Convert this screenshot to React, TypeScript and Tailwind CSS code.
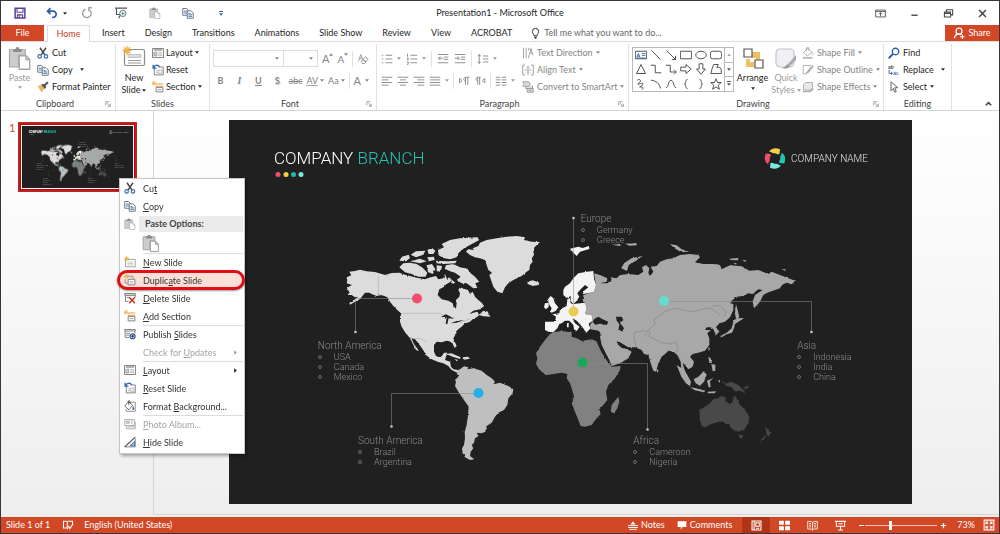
import React from "react";

type IconProps = { children: React.ReactNode; s?: string; box?: string };

function Icon({ children, s = "size-3", box = "0 0 16 16" }: IconProps) {
  return (
    <svg viewBox={box} className={`${s} shrink-0`} fill="none" stroke="currentColor" strokeWidth="1.2" aria-hidden="true">
      {children}
    </svg>
  );
}

function Caret() {
  return (
    <svg viewBox="0 0 6 4" className="h-[3px] w-1 shrink-0" aria-hidden="true">
      <path d="M0 0h6L3 4z" fill="currentColor" />
    </svg>
  );
}

/* ---------- Icons ---------- */

const SaveIcon = () => (
  <Icon>
    <path d="M1.5 1.5h13v13h-13z" stroke="#5b3fa0" strokeWidth="2" />
    <path d="M4 2v5h8V2M4.500 14.500v-4h7v4M7 11v3" stroke="#5b3fa0" strokeWidth="1.4" />
  </Icon>
);
const UndoIcon = () => (
  <Icon>
    <path d="M6 1.500 2 5.500l4 4M2.500 5.500H9c6 0 6.500 8-1 8.500" stroke="#2b5fae" strokeWidth="2.300" />
  </Icon>
);
const RedoIcon = () => (
  <Icon>
    <path d="M6 3a5.700 5.700 0 1 0 6 1.500M14.500 1h-4v4.500" stroke="#9b9b9b" strokeWidth="1.800" />
  </Icon>
);
const PresentIcon = () => (
  <Icon>
    <path d="M0 1.500h16M2 2v8h5M5 15l2.500-5" stroke="#555" strokeWidth="1.500" />
    <circle cx="10.500" cy="8.500" r="4.200" stroke="#4f7376" fill="#eef4f4" />
    <path d="m9.300 6.500 3.500 2-3.500 2z" fill="#44817f" stroke="none" />
  </Icon>
);
const ClipIcon = ({ s = "size-3", tone = "#a9a6a9" }: { s?: string; tone?: string }) => (
  <Icon s={s}>
    <path d="M1 2.500h10.500V6H7v8H1z" fill="#cfccd0" stroke={tone} strokeWidth=".8" />
    <path d="M3.500 4V2h1.700V.8h2.200V2h1.700v2z" fill="#8d8a8e" stroke="none" />
    <path d="M7.500 6.500H12l2.500 2.500v6.500h-7z" fill="#fff" stroke={tone} strokeWidth=".9" />
    <path d="M12 6.500V9h2.500" stroke={tone} strokeWidth=".9" />
  </Icon>
);
const CopyIcon = ({ s = "size-3" }: { s?: string }) => (
  <Icon s={s}>
    <path d="M1 2h5l2.500 2.500V11H1z" fill="#fff" stroke="#5d6b78" />
    <path d="M2.500 5.500h4M2.500 8h4" stroke="#3f6fa8" />
    <path d="M7 5h5l3 3v7H7z" fill="#fff" stroke="#5d6b78" />
    <path d="M8.500 8.500h3M8.500 10.500h5M8.500 12.500h5" stroke="#3f6fa8" />
  </Icon>
);
const CutIcon = ({ s = "size-3" }: { s?: string }) => (
  <Icon s={s}>
    <path d="M4 1l6.500 9.500M12 1 5.500 10.500" stroke="#444" strokeWidth="1.900" />
    <circle cx="3.500" cy="12.500" r="2.300" stroke="#3467ad" strokeWidth="1.500" />
    <circle cx="12" cy="12.500" r="2.300" stroke="#3467ad" strokeWidth="1.500" />
  </Icon>
);
const BrushIcon = () => (
  <Icon>
    <path d="m1 7 5-2 4 5-4 5z" fill="#f0b65a" stroke="none" />
    <path d="m5.500 5 3-1.500 4 4.500-2 2.500z" fill="#555" stroke="none" />
    <path d="m10 6 4.500-4.500" stroke="#555" strokeWidth="2.800" />
  </Icon>
);
const Spark = ({ x = 3.5, y = 3.5 }: { x?: number; y?: number }) => (
  <path
    d={`M${x} ${y - 3.5}v7M${x - 3.5} ${y}h7M${x - 2.5} ${y - 2.5}l5 5M${x + 2.5} ${y - 2.5}l-5 5`}
    stroke="#f0b040"
    strokeWidth="1.100"
  />
);
const NewSlideIcon = ({ s = "size-3" }: { s?: string }) => (
  <Icon s={s}>
    <path d="M2 4.500h13v10H2z" fill="#fff" stroke="#888" strokeWidth="1" />
    <path d="M4.500 8h8M4.500 10h8M4.500 12h8" stroke="#aaa" strokeWidth=".8" />
    <Spark />
  </Icon>
);
const BigNewSlideIcon = () => (
  <Icon s="h-[22px] w-[24px]" box="0 0 24 22">
    <rect x="2.500" y="3.500" width="20" height="16" rx="1.500" fill="#fff" stroke="#8a8a8a" />
    <path d="M6 8.500h13v3H6z" fill="#ddd" stroke="#bbb" strokeWidth=".8" />
    <path d="M6 14.500h13M6 17h13" stroke="#999" />
    <path d="M5 0v9M.5 4.500h9M1.800 1.300l6.400 6.400M8.200 1.300 1.800 7.700" stroke="#efb24a" strokeWidth="1.300" />
  </Icon>
);
const LayoutIcon = () => (
  <Icon>
    <path d="M.7 2h14.600v12H.7z" fill="#fff" stroke="#777" />
    <path d="M2.500 4h11" stroke="#777" strokeWidth="1.500" />
    <path d="M2.500 7h4v5h-4z" fill="#ccc" stroke="#888" strokeWidth=".8" />
    <path d="M8.500 7.500h5M8.500 9.500h5M8.500 11.500h5" stroke="#999" strokeWidth=".9" />
  </Icon>
);
const ResetIcon = () => (
  <Icon>
    <path d="M3 5v9.500h12V4H9" fill="#fff" stroke="#777" />
    <path d="M9 8h4v4.500H9zM5 9h3M5 11.500h3" stroke="#999" strokeWidth=".9" />
    <path d="M1.500 1v4.500H6M2 5c1.500-4 6.500-4.500 8-1" stroke="#2b66b0" strokeWidth="1.700" />
  </Icon>
);
const SectionIcon = () => (
  <Icon>
    <path d="M5 4h10M5 7h10" stroke="#e8a13c" strokeWidth="1.600" />
    <path d="M5.500 8.500h9v6h-9z" fill="#fff" stroke="#777" />
    <path d="M7.500 11.500h5" stroke="#999" />
    <Spark x={2.5} y={3} />
  </Icon>
);
const DuplicateIcon = () => (
  <Icon>
    <path d="M4 3h8v3M1.500 7v5H5" stroke="#888" />
    <path d="M5.500 7h9v7.500h-9z" fill="#fff" stroke="#777" />
    <path d="M7.500 10h5M7.500 12h5" stroke="#999" strokeWidth=".9" />
    <Spark x={3} y={3} />
  </Icon>
);
const DeleteIcon = () => (
  <Icon>
    <path d="M1 2h14v2.500H1z" fill="#ddd" stroke="#777" />
    <path d="M2 4.500v8h4M15 4.500V7M4 7.500h4" stroke="#777" />
    <path d="m7 7 7.500 8M14.500 7 7 15" stroke="#c42f25" strokeWidth="2" />
  </Icon>
);
const PublishIcon = () => (
  <Icon>
    <path d="M1 2h14v2H1zM1.500 4v8.500H7M14.500 4v3M3 7h5M3 9.500h4" stroke="#777" />
    <circle cx="11.500" cy="11" r="3.300" fill="#fff" stroke="#2b5c9e" strokeWidth="1.700" />
    <circle cx="11.500" cy="11" r="1.200" fill="#2b5c9e" />
  </Icon>
);
const FormatBgIcon = () => (
  <Icon>
    <path d="M5 3h10v12H3v-3" stroke="#888" fill="#fff" />
    <path d="m1 8 5-6 5.500 5-5 6z" fill="#fff" stroke="#555" strokeWidth="1.100" />
    <path d="M6 6V1.500C6 .5 8 .5 8 2v3" stroke="#555" />
    <path d="m12 7 1.800 5c0 1.500-2.800 1.500-2.600 0z" fill="#2b66b0" stroke="none" />
  </Icon>
);
const PhotoIcon = () => (
  <Icon>
    <path d="M1 2h13v8H1zM3.500 10v4.500H15V5" stroke="#aaa" />
    <path d="M3 4h4v3H3zM9 4h3M9 6.500h3M5 13l3-3 2 2 2-3 2 4" stroke="#aaa" fill="#ddd" />
  </Icon>
);
const HideIcon = () => (
  <Icon>
    <path d="M1 14.500h14V3.500" stroke="#777" />
    <path d="M8 13h6V7z" fill="#a9c4e4" stroke="#3b6aa8" />
    <path d="M1 14.500 15 1.500" stroke="#444" strokeWidth="1.400" />
  </Icon>
);
const Launcher = () => (
  <Icon s="size-[6px]" box="0 0 8 8">
    <path d="M1 6V1h5M3 3l4 4M7 3.500V7H3.500" stroke="#999" />
  </Icon>
);

type ListKind = "bullet" | "number" | "outdent" | "indent" | "spacing" | "left" | "center" | "right" | "justify" | "ltr" | "rtl" | "columns";

const listPaths: Record<ListKind, string> = {
  bullet: "M1 3h2M1 8h2M1 13h2M6 3h9M6 8h9M6 13h9",
  number: "M2 1v4M1 7h2v2H1M1 12h2v3H1M6 3h9M6 8h9M6 13h9",
  outdent: "M1 2h14M9 5.500h6M9 8.500h6M1 13h14M8 7H2M4.500 4.500 2 7l2.500 2.500",
  indent: "M1 2h14M9 5.500h6M9 8.500h6M1 13h14M1 7h6M4.500 4.500 7 7 4.500 9.500",
  spacing: "M3 2v12M1 4.500 3 2l2 2.500M1 11.500 3 14l2-2.500M8 4h7M8 8h7M8 12h7",
  left: "M1 3h14M1 6.500h9M1 10h14M1 13.500h9",
  center: "M1 3h14M4 6.500h8M1 10h14M4 13.500h8",
  right: "M1 3h14M6 6.500h9M1 10h14M6 13.500h9",
  justify: "M1 3h14M1 6.500h14M1 10h14M1 13.500h14",
  ltr: "M2 4.500v6L5.500 7.500zM10 13V3h5M13 3v10M10 3c-3 0-3 5 0 5",
  rtl: "M14.500 4.500v6L11 7.500zM5 13V3h4M7.500 3v10M5 3c-3 0-3 5 0 5",
  columns: "M1 3h6M1 6.500h6M1 10h6M1 13.500h6M9 3h6M9 6.500h6M9 10h6M9 13.500h6",
};

const ListIcon = ({ kind }: { kind: ListKind }) => (
  <Icon s="size-3">
    <path d={listPaths[kind]} stroke="#8f8f8f" strokeWidth="1.300" />
  </Icon>
);

/* ---------- Ribbon ---------- */

const btn = "flex items-center whitespace-nowrap";

function Group({ label, width, launcher, children }: { label: string; width: string; launcher?: boolean; children: React.ReactNode }) {
  return (
    <section className={`flex shrink-0 flex-col border-r border-[#e2e2e2] ${width}`}>
      <div className="flex h-[53px] items-start">{children}</div>
      <div className="flex h-[13px] items-center px-1">
        <span className="flex-1 text-center text-[#444]">{label}</span>
        {launcher && (
          <button aria-label={`${label} settings`}>
            <Launcher />
          </button>
        )}
      </div>
    </section>
  );
}

function Row({ icon, label, caret, muted, gap = "gap-[3px]" }: { icon: React.ReactNode; label: string; caret?: boolean; muted?: boolean; gap?: string }) {
  return (
    <button className={`${btn} h-[17px] ${gap} ${muted ? "text-[#858585]" : "text-[#262626]"}`}>
      {icon}
      <span>{label}</span>
      {caret && <Caret />}
    </button>
  );
}

function ShapeGallery() {
  const shapes = [
    <><path d="M.5 3h15v10H.5z" /><path d="m2.500 11 2-5 2 5M3 9.500h3M9 6h5M9 8.500h5M2 12h12" stroke="#35659f" /></>,
    <path d="m2 2 12 12" />,
    <path d="m2 2 12 12M14 9v5H9" />,
    <path d="M.5 3h15v10H.5z" />,
    <ellipse cx="8" cy="8" rx="7" ry="5" />,
    <rect x=".5" y="3" width="15" height="10" rx="3" />,
    <path d="m8 2 6 12H2z" />,
    <path d="M1 3h6v10h8" />,
    <path d="M1 3h6v9h8M12 9l3 3-3 3" />,
    <path d="M1 5.500h7V2l7 6-7 6v-3.500H1z" />,
    <path d="M5.500 1v7H2l6 7 6-7h-3.500V1z" />,
    <path d="M5 2h6L9 6c3-1 6 0 6 3v5H1l2-7z" />,
    <path d="M3 3c3-3 6 1 3 3S3 9 6 8s6-2 4 1-6 3-2 3 3 2 1 4" />,
    <path d="M1 3c7 0 12 5 13 11" />,
    <path d="M1 13C5 13 4 3 8 3s3 10 7 10" />,
    <path d="M10 2C6 2 9 8 6 8c3 0 0 6 4 6" />,
    <path d="M6 2c4 0 1 6 4 6-3 0 0 6-4 6" />,
    <path d="m8 1 2 5h5l-4 3.500 1.500 5.500L8 12l-4.500 3L5 9.500 1 6h5z" />,
  ];
  return (
    <div className="mt-[3px] flex h-[45px] border border-[#b9b9b9] text-[#444]">
      <div className="grid grid-cols-6 gap-x-px px-px">
        {shapes.map((shape, i) => (
          <button key={i} aria-label={`Shape ${i + 1}`} className="grid w-[14px] place-items-center">
            <Icon>{shape}</Icon>
          </button>
        ))}
      </div>
      <div className="grid w-[9px] grid-rows-3 border-l border-[#b9b9b9] text-[#555]">
        <button aria-label="Previous shapes" className="grid rotate-180 place-items-center text-[#aaa]"><Caret /></button>
        <button aria-label="Next shapes" className="grid place-items-center border-y border-[#b9b9b9]"><Caret /></button>
        <button aria-label="All shapes" className="flex flex-col items-center justify-center gap-px"><span className="h-px w-1 bg-[#555]" /><Caret /></button>
      </div>
    </div>
  );
}

function Ribbon() {
  const rule = <span className="h-4 w-px bg-[#e2e2e2]" />;
  return (
    <div className="flex overflow-hidden border-b border-[#d5d5d5] bg-white pt-[2px]">
      <Group label="Clipboard" width="w-[115px]" launcher>
        <button className="flex w-[33px] flex-col items-center pl-1 pt-[2px] text-[#9a9a9a]">
          <ClipIcon s="size-[24px]" />
          <span className="mt-[2px]">Paste</span>
          <span className="mt-[2px]"><Caret /></span>
        </button>
        <div className="pl-[3px]">
          <Row icon={<CutIcon />} label="Cut" />
          <button className={`${btn} h-[17px] gap-[3px]`}><CopyIcon /><span>Copy</span><span className="pl-1"><Caret /></span></button>
          <Row icon={<BrushIcon />} label="Format Painter" />
        </div>
      </Group>

      <Group label="Slides" width="w-[94px]">
        <button className="flex w-[36px] flex-col items-center pt-[2px] leading-3">
          <BigNewSlideIcon />
          <span className="mt-1">New</span>
          <span className="flex items-center gap-[2px]">Slide <Caret /></span>
        </button>
        <div>
          <Row icon={<LayoutIcon />} label="Layout" caret gap="gap-[2px]" />
          <Row icon={<ResetIcon />} label="Reset" gap="gap-[2px]" />
          <Row icon={<SectionIcon />} label="Section" caret gap="gap-[2px]" />
        </div>
      </Group>

      <Group label="Font" width="w-[167px]" launcher>
        <div className="flex-1 px-[3px] pt-[6px] text-[#858585]">
          <div className="flex h-[17px] items-center">
            <div className="grid h-[17px] w-[71px] items-center border border-[#dcdcdc]">
              <select aria-label="Font name" disabled className="col-start-1 row-start-1 size-full appearance-none"><option></option></select>
              <span className="col-start-1 row-start-1 justify-self-end pr-1"><Caret /></span>
            </div>
            <div className="grid h-[17px] w-[34px] items-center border border-l-0 border-[#dcdcdc]">
              <select aria-label="Font size" disabled className="col-start-1 row-start-1 size-full appearance-none"><option></option></select>
              <span className="col-start-1 row-start-1 justify-self-end pr-1"><Caret /></span>
            </div>
            <div className="flex flex-1 items-center justify-between pl-1 pr-1">
              <button aria-label="Increase font size" className="flex items-start text-[11px]">A<span className="rotate-180"><Caret /></span></button>
              <button aria-label="Decrease font size" className="flex items-start text-[10px]">A<Caret /></button>
              {rule}
              <button aria-label="Clear formatting"><Icon><path d="m2 11 3-9 3 8M3 7h4M6 11l5-6 4 3-5 6H7z" stroke="#999" /><path d="m8 9 4 3" stroke="#999" strokeWidth="2" /></Icon></button>
            </div>
          </div>
          <div className="mt-[5px] flex h-[17px] items-center justify-between pr-1">
            <button aria-label="Bold" className="w-[15px] font-bold">B</button>
            <button aria-label="Italic" className="w-[15px] font-['Liberation_Serif',serif] text-[10px] font-bold italic">I</button>
            <button aria-label="Underline" className="w-[15px] font-bold underline">U</button>
            <button aria-label="Shadow" className="w-[15px] font-bold [text-shadow:1px_1px_0_#ccc]">S</button>
            <button aria-label="Strikethrough" className="line-through">abc</button>
            <button aria-label="Character spacing" className="flex items-center gap-[2px]"><span className="border-b border-[#aaa] leading-[9px]">AV</span><Caret /></button>
            <button aria-label="Change case" className="flex items-center gap-[2px]">Aa<Caret /></button>
            {rule}
            <button aria-label="Font color" className="flex items-center gap-1 text-[11px]">A<Caret /></button>
          </div>
        </div>
      </Group>

      <Group label="Paragraph" width="w-[252px]" launcher>
        <div className="w-[145px] shrink-0 pl-1 pt-[6px] text-[#9a9a9a]">
          <div className="flex h-[17px] items-center gap-[5px]">
            <button aria-label="Bullets" className="flex items-center gap-1"><ListIcon kind="bullet" /><Caret /></button>
            <button aria-label="Numbering" className="flex items-center gap-1"><ListIcon kind="number" /><Caret /></button>
            {rule}
            <button aria-label="Decrease indent"><ListIcon kind="outdent" /></button>
            <button aria-label="Increase indent"><ListIcon kind="indent" /></button>
            {rule}
            <button aria-label="Line spacing" className="flex items-center gap-1"><ListIcon kind="spacing" /><Caret /></button>
          </div>
          <div className="mt-[5px] flex h-[17px] items-center gap-1">
            <button aria-label="Align left"><ListIcon kind="left" /></button>
            <button aria-label="Center"><ListIcon kind="center" /></button>
            <button aria-label="Align right"><ListIcon kind="right" /></button>
            <button aria-label="Justify" className="flex items-center gap-1"><ListIcon kind="justify" /><Caret /></button>
            {rule}
            <button aria-label="Left to right"><ListIcon kind="ltr" /></button>
            <button aria-label="Right to left"><ListIcon kind="rtl" /></button>
            {rule}
            <button aria-label="Columns" className="flex items-center gap-1"><ListIcon kind="columns" /><Caret /></button>
          </div>
        </div>
        <div>
          <Row muted caret label="Text Direction" icon={<Icon><path d="M2 1v14M5.500 1v14M9 11v4M9 1v4M9.500 11l2.500-9 2.500 9M10.500 8h3" stroke="#999" /></Icon>} />
          <Row muted caret label="Align Text" icon={<Icon><path d="M4 1.500H1v13h3M12 1.500h3v13h-3M4 8h8M8 2v4M6.500 4.500 8 6l1.500-1.500M8 14v-4M6.500 11.500 8 10l1.500 1.500" stroke="#999" /></Icon>} />
          <Row muted caret label="Convert to SmartArt" icon={<Icon><path d="M1 1h8l2 3-2 3H1l2-3zM5 7v3h9V6M7 10v5h8v-5zM9 12.500h4" stroke="#999" fill="#ddd" /></Icon>} />
        </div>
      </Group>

      <Group label="Drawing" width="w-[255px]" launcher>
        <div className="pl-[3px]"><ShapeGallery /></div>
        <button className="flex w-[37px] flex-col items-center pt-1 leading-3">
          <Icon s="size-[22px]" box="0 0 22 22">
            <path d="M10 4h8v8h-4V10h-4zM4 11h4v3h4v5H4z" fill="#efbe62" stroke="none" />
            <path d="M2 1h8v8H2zM13 12h8v8h-8z" fill="#fff" stroke="#555" />
          </Icon>
          <span className="mt-[2px]">Arrange</span>
          <span className="mt-[3px]"><Caret /></span>
        </button>
        <button className="flex w-[30px] flex-col items-center pt-1 leading-3 text-[#9a9a9a]">
          <Icon s="size-[22px]" box="0 0 22 22">
            <rect x="1" y="1" width="18" height="18" rx="4" fill="#f1eff3" stroke="#c5c1c8" />
            <path d="M21 7v5l-6 6-2-2z" fill="#aaa" stroke="none" /><path d="m13 16 2 2c-2 3-6 3-8 2 3 0 4-3 6-4z" fill="#999" stroke="none" />
          </Icon>
          <span className="mt-[2px]">Quick</span>
          <span className="flex items-center gap-[2px]">Styles <Caret /></span>
        </button>
        <div className="pl-px">
          <Row muted caret label="Shape Fill" icon={<Icon><path d="m2 7 6-5 5 5-6 5zM6 5V1h3v4M13 7c2 1 2 3 1 4" stroke="#aaa" /><path d="M1 14.500h13" stroke="#bbb" strokeWidth="2.500" /></Icon>} />
          <Row muted caret label="Shape Outline" icon={<Icon><path d="M12 2H1.500v11H7" stroke="#aaa" /><path d="m7 10 7-8 1 1-6 8-3 1z" fill="#aaa" stroke="#aaa" /></Icon>} />
          <Row muted caret label="Shape Effects" icon={<Icon><path d="m2 5 3-3h9v7l-3 3H2z" fill="#e8e8e8" stroke="#aaa" /><path d="M1 14h10l4-4" stroke="#aaa" strokeWidth="2.200" /></Icon>} />
        </div>
      </Group>

      <Group label="Editing" width="w-[68px]">
        <div className="pl-1">
          <Row label="Find" icon={<Icon><circle cx="10" cy="6" r="4.300" stroke="#2b5fae" strokeWidth="1.800" /><path d="m7 9-6 6" stroke="#2b5fae" strokeWidth="2.500" /></Icon>} />
          <button className={`${btn} h-[17px] gap-[3px]`}>
            <Icon>
              <text x="0" y="6" fontSize="7" fill="#444" stroke="none" fontWeight="bold">ab</text>
              <text x="7" y="14" fontSize="7" fill="#2b5fae" stroke="none" fontWeight="bold">ac</text>
              <path d="M1.500 8v4.500h4M4 10.500l2 2-2 2" stroke="#2b5fae" />
            </Icon>
            <span>Replace</span><span className="pl-1"><Caret /></span>
          </button>
          <Row label="Select" caret icon={<Icon><path d="M4 1v12l3-3 2 5 2-1-2-5h4z" fill="#fff" stroke="#555" /></Icon>} />
        </div>
      </Group>
      <div className="flex flex-1 items-end justify-end pr-[6px] pb-[2px]">
        <button aria-label="Collapse ribbon"><Icon s="size-[9px]" box="0 0 10 10"><path d="m2 7 3-3 3 3" stroke="#444" strokeWidth="1.800" /></Icon></button>
      </div>
    </div>
  );
}

/* ---------- Slide ---------- */

function SlideArt({ id }: { id: string }) {
  return (
    <svg viewBox="229 120 683 384" className="block size-full" aria-hidden="true">
      <defs>
        <filter id={id} x="-5%" y="-5%" width="110%" height="110%">
          <feTurbulence type="fractalNoise" baseFrequency="0.3" numOctaves="2" seed="4" />
          <feDisplacementMap in="SourceGraphic" scale="2" xChannelSelector="R" yChannelSelector="G" />
        </filter>
      </defs>
      <g filter={`url(#${id})`}>
        {/* North America and Greenland */}
        <g transform="translate(310 200) scale(.33333)" fill="#dcdcdc">
          <path d="M112 243 110 232 124 226 118 215 135 213 150 209 170 214 195 216 225 225 245 219 268 218 285 224 300 228 320 233 345 238 362 232 378 228 385 238 400 235 405 222 412 240 420 232 424 244 410 252 400 262 388 268 383 285 395 298 415 302 428 310 432 325 438 325 440 310 438 300 448 290 450 280 445 270 450 262 462 266 474 270 480 282 488 275 495 290 505 300 515 308 522 318 510 328 490 332 478 342 490 338 502 335 508 345 500 352 488 358 480 365 465 370 455 380 442 390 438 402 430 415 440 438 434 444 425 425 410 422 395 427 380 425 372 435 372 455 378 468 392 472 402 458 412 458 408 470 405 480 420 485 423 500 430 508 444 510 452 512 442 518 425 510 415 498 400 490 385 486 365 478 350 467 338 448 325 430 315 417 304 415 312 432 327 453 318 450 300 415 285 397 275 380 270 365 270 350 275 342 262 330 250 318 240 305 232 292 215 285 200 288 185 282 178 278 165 278 158 287 150 297 135 305 120 314 118 309 135 298 145 290 135 292 125 285 113 285 120 275 110 268 116 260 126 255 110 250z" />
          <path d="M480 165 468 155 475 148 492 150 488 145 505 138 510 128 530 120 560 115 590 110 620 108 645 112 642 120 665 125 690 126 675 140 670 155 672 165 665 175 668 185 660 195 658 210 650 215 635 228 610 240 595 250 585 262 577 280 562 275 550 260 545 245 538 225 546 218 535 210 530 195 525 180 510 175 495 172z" />
          <path d="M408 196 430 192 450 202 472 206 482 220 495 230 508 245 496 250 502 264 490 265 470 250 455 250 440 240 452 230 435 218 420 214 404 206z" />
          <path d="M268 202 280 190 300 188 320 192 338 203 352 218 347 230 325 230 305 222 285 217z" />
          <path d="M386 166 384 150 402 142 395 132 420 120 450 115 500 112 508 120 480 135 462 145 445 160 440 172 420 178 400 174z" />
          <path d="M268 182 276 170 296 164 300 174 288 184zM302 164 318 154 346 152 340 164 318 172zM300 184 330 176 350 184 330 190zM350 196 366 192 376 208 368 222 354 216zM378 182 412 184 440 182 436 190 400 192 380 190zM352 150 366 144 376 152 370 162 356 162zM380 196 396 198 392 216 380 212zM352 172 372 170 374 180 356 184zM422 236 436 248 428 252zM506 345 520 332 532 334 541 350 520 349zM408 462 424 460 452 472 450 477 428 470zM456 472 474 470 480 476 462 479zM434 477 444 480 440 484z" />
          <path d="M652 245 668 241 688 248 686 255 666 258 654 252z" />
          <path d="M393 350 408 343 422 350 432 356 416 355 412 372 407 372 410 352zM422 370 440 363 462 360 440 368z" fill="#202020" />
        </g>
        {/* South America and Africa */}
        <g transform="translate(340 350) scale(.33333)" fill="#bfbfbf">
          <path d="M350 62 360 58 372 49 385 52 382 58 400 55 425 62 440 75 455 85 465 95 460 103 480 98 505 108 520 118 518 130 505 145 502 165 492 180 475 188 465 200 455 218 440 228 436 245 425 250 410 248 416 258 405 265 402 278 395 285 400 295 392 305 390 318 403 328 390 330 375 322 368 310 366 295 372 285 375 265 374 245 380 225 384 195 386 170 372 150 358 130 345 108 348 95 345 90 355 80 352 70z" />
          <path d="M630-48 640-53 665-57 685-54 695-55 695-40 710-35 730-25 740-30 755-32 772-25 780-10 790 10 802 30 815 50 842 48 840 60 825 85 805 105 798 125 802 150 790 165 778 178 782 192 770 205 755 225 735 230 722 228 715 210 705 185 695 160 702 140 695 115 690 100 680 85 682 72 665 68 640 72 620 75 600 62 588 42 592 25 588 10 600-10 615-30zM812 185 815 165 825 152 835 140 838 155 832 175 822 190z" fill="#818181" />
        </g>
        {/* Asia */}
        <g transform="translate(520 200) scale(.33333)" fill="#a8a8a8">
          <path d="M222 220 240 225 262 235 260 245 240 250 262 250 275 240 272 232 290 235 300 225 325 222 355 225 370 215 366 202 378 195 388 205 385 220 390 228 400 215 392 200 410 198 420 185 440 178 460 175 480 165 510 162 535 165 540 172 525 187 550 192 580 192 600 195 605 208 630 196 665 199 688 212 715 210 745 222 755 215 780 225 825 242 815 253 800 248 785 255 780 265 765 270 742 278 730 285 720 305 702 325 698 305 705 285 715 278 728 270 715 268 698 282 685 280 670 288 650 290 635 302 630 310 640 312 640 330 630 352 615 365 598 370 588 382 598 395 588 405 580 388 572 382 560 382 555 390 572 390 562 400 568 415 568 435 555 452 535 458 518 462 510 470 522 485 518 500 505 508 495 495 488 488 492 505 502 528 494 528 484 505 482 485 472 465 460 455 445 452 438 460 425 470 415 490 408 515 400 512 392 490 385 465 372 462 365 450 345 442 325 442 302 428 293 422 290 430 305 444 318 446 335 455 325 475 300 490 275 498 268 480 255 455 245 435 240 410 245 402 235 392 212 388 210 376 218 362 215 345 195 342 200 325 195 308 188 300 190 285 222 275 228 255z" />
          <path d="M304 205 312 190 335 175 368 168 348 182 326 195 321 213zM450 132 470 136 485 148 508 155 482 156 462 143zM275 134 300 132 302 138zM315 131 350 130 350 136 328 137zM628 176 655 174 654 181 632 180zM664 180 678 181 676 185zM785 208 796 207 796 212zM640 188 650 190 648 194z" />
          <path d="M648 313 653 330 658 352 648 356 645 340zM642 360 652 355 672 354 660 362 645 372 642 385 636 398 620 403 605 412 600 408 620 398 635 385 638 370zM565 440 570 446 566 454zM565 470 572 475 576 490 568 488zM574 492 586 494 586 512 578 514 576 502zM470 495 485 505 502 525 513 545 510 559 498 550 484 530zM510 562 530 565 556 572 552 577 525 571zM562 575 588 574 584 580 564 580zM521 538 535 530 552 513 560 524 552 545 540 557 527 550zM561 542 580 534 570 544 572 562 566 562zM594 542 600 540 600 548zM408 505 416 512 412 518z" />
          <path d="M222 358 235 350 248 358 265 365 260 375 240 371 226 374 218 366zM288 350 305 350 310 360 300 368 312 385 306 395 296 388 298 372 290 362zM230 426 238 424 266 482 274 497 262 484 246 460z" fill="#202020" />
        </g>
        {/* Europe */}
        <g transform="translate(520 200) scale(.33333)" fill="#f4f4f4">
          <path d="M130 270 135 260 150 250 160 235 175 220 200 215 220 213 222 235 228 255 222 275 205 280 188 282 192 272 205 262 195 255 182 268 172 280 178 290 170 302 160 312 152 302 152 288 140 294 130 285z" />
          <path d="M75 365 105 365 108 350 97 343 118 340 120 328 140 318 142 298 150 294 152 310 160 312 195 308 200 325 195 342 215 345 218 362 205 372 212 385 198 399 190 385 182 375 170 362 158 355 165 370 179 380 170 393 162 388 160 375 148 362 135 362 125 370 118 372 112 385 100 397 85 395 75 390z" />
          <path d="M90 335 95 325 88 314 84 298 92 288 100 295 105 310 115 322 108 332 95 338zM72 322 75 310 86 308 86 320 78 328zM150 146 175 140 188 144 207 138 208 147 180 155 170 168 160 158zM141 370 146 368 146 382 141 382z" />
        </g>
        {/* Oceania */}
        <g transform="translate(680 230) scale(.33333)" fill="#484848">
          <path d="M58 540 75 530 90 520 100 508 115 505 122 498 138 502 135 512 150 522 158 515 163 495 170 505 178 522 195 540 208 560 205 580 192 600 175 605 160 600 150 590 148 580 140 585 130 575 115 575 95 582 75 592 65 588 60 570zM175 614 190 616 183 628zM255 588 262 598 275 605 265 620 260 612zM262 613 252 628 238 642 246 626zM123 453 140 460 155 455 175 465 185 475 197 490 180 482 165 484 155 472 140 468zM188 474 204 466 208 470 196 478z" />
        </g>
      </g>
      {/* Country borders */}
      <path transform="translate(310 200) scale(.33333)" d="M205 226V280l12 6M277 340H388l12 4M308 417l20-2 22 10M450 368l30-12" fill="none" stroke="#b2b2b2" strokeWidth="2" />
      <path
        transform="translate(520 200) scale(.33333)"
        d="M372 410 390 385 405 372 402 360 422 345 438 332 470 325 498 332 520 335 545 328 560 324 578 328 600 345M380 392 390 398 388 410 405 418 425 428 455 432 466 425 474 445 468 460 482 478M380 392 345 396 342 410 348 440M575 318 600 316 618 336 612 350"
        fill="none"
        stroke="#878787"
        strokeWidth="2"
      />
      {/* Callout lines */}
      <path d="M417 298.500H355.500V331M573.500 311V218.500M478 393.500H391.500V426M583 363.500H647.500V429M664 301.500H811.500V332" fill="none" stroke="#8a8a8a" strokeOpacity=".55" />
      <g fill="#c6c6c6">
        <circle cx="355.500" cy="332" r="1.300" /><circle cx="573.500" cy="218" r="1.300" /><circle cx="391.500" cy="426.500" r="1.300" /><circle cx="647.500" cy="429.500" r="1.300" /><circle cx="811.500" cy="332" r="1.300" />
      </g>
      <circle cx="417" cy="298.500" r="5" fill="#f14d6c" />
      <circle cx="573.500" cy="311.500" r="5" fill="#e8cc55" />
      <circle cx="478.500" cy="393" r="5" fill="#23aee8" />
      <circle cx="582.500" cy="362.500" r="5" fill="#1ba75a" />
      <circle cx="664" cy="301" r="5" fill="#64dcd0" />
      <circle cx="278" cy="174.500" r="2.500" fill="#f14d6c" />
      <circle cx="286" cy="174.500" r="2.500" fill="#f2cf49" />
      <circle cx="293.500" cy="174.500" r="2.500" fill="#23b9a8" />
      <circle cx="301" cy="174.500" r="2.500" fill="#7be8e0" />
      <g transform="translate(775 158.500)">
        <path d="M-6-6.500C-4-10.500 1-11 5-9.200L4.500-4.500C2-3.500 1-6-1-5.200-3-4.800-4-7.500-6-6.500z" fill="#f2cf49" />
        <path d="M6.500-6C10.500-4 11 1 9.200 5L4.500 4.500C3.500 2 6 1 5.200-1 4.800-3 7.500-4 6.500-6z" fill="#23c4b2" />
        <path d="M6 6.500C4 10.500-1 11-5 9.200L-4.500 4.500C-2 3.500-1 6 1 5.200 3 4.800 4 7.500 6 6.500z" fill="#7be8e0" />
        <path d="M-6.500 6C-10.500 4-11-1-9.200-5L-4.500-4.500C-3.500-2-6-1-5.200 1-4.800 3-7.500 4-6.500 6z" fill="#f14d6c" />
      </g>
    </svg>
  );
}

const regions = [
  { name: "Europe", places: ["Germany", "Greece"], at: "left-[51.500%] top-[23.900%]" },
  { name: "North America", places: ["USA", "Canada", "Mexico"], at: "left-[13%] top-[57%]" },
  { name: "Asia", places: ["Indonesia", "India", "China"], at: "left-[83.200%] top-[57%]" },
  { name: "South America", places: ["Brazil", "Argentina"], at: "left-[18.900%] top-[81.800%]" },
  { name: "Africa", places: ["Cameroon", "Nigeria"], at: "left-[59.200%] top-[81.800%]" },
];

function Slide() {
  return (
    <div className="relative aspect-[683/384] w-full bg-[#202020] font-['Roboto',sans-serif] font-light">
      <SlideArt id="coast" />
      <h1 className="absolute left-[6.600%] top-[6.800%] text-[17px] leading-6 whitespace-nowrap text-white">
        COMPANY <span className="text-[#23c4b2]">BRANCH</span>
      </h1>
      <p className="absolute left-[82.300%] top-[8.300%] text-[10px] leading-[14px] whitespace-nowrap text-[#e0e0e0]">COMPANY NAME</p>
      {regions.map((r) => (
        <div key={r.name} className={`absolute whitespace-nowrap text-[#8a8a8a] ${r.at}`}>
          <h2 className="text-[10px] leading-[13px]">{r.name}</h2>
          <ul className="text-[9px] leading-[10px]">
            {r.places.map((p) => (
              <li key={p} className="flex items-center gap-3">
                <span className="size-1 rounded-full border border-[#6d6d6d]" />
                {p}
              </li>
            ))}
          </ul>
        </div>
      ))}
    </div>
  );
}

function Thumbnail() {
  return (
    <div className="relative aspect-[683/384] bg-[#202020] font-['Roboto',sans-serif]">
      <SlideArt id="coast-small" />
      <p className="absolute left-[6%] top-[6%] text-[3px] leading-[5px] font-bold text-white" aria-hidden="true">
        COMPANY <span className="text-[#23c4b2]">BRANCH</span>
      </p>
      <p className="absolute left-[82%] top-[8%] text-[2px] leading-[3px] text-[#999]" aria-hidden="true">COMPANY NAME</p>
      {regions.map((r) => (
        <p key={r.name} className={`absolute w-3 text-[2px] leading-[2px] text-[#777] ${r.at}`} aria-hidden="true">
          {r.name} {r.places.join(" ")}
        </p>
      ))}
    </div>
  );
}

/* ---------- Context menu ---------- */

function Mnemonic({ text }: { text: string }) {
  const at = text.indexOf("&");
  if (at < 0) return <>{text}</>;
  return (
    <>
      {text.slice(0, at)}
      <span className="underline">{text[at + 1]}</span>
      {text.slice(at + 2)}
    </>
  );
}

type Entry = { label: string; icon?: React.ReactNode; rule?: boolean; off?: boolean; sub?: boolean; marked?: boolean };

const entries: Entry[] = [
  { label: "&New Slide", icon: <NewSlideIcon />, rule: true },
  { label: "Duplic&ate Slide", icon: <DuplicateIcon />, marked: true },
  { label: "&Delete Slide", icon: <DeleteIcon /> },
  { label: "&Add Section", icon: <SectionIcon /> },
  { label: "Publish &Slides", icon: <PublishIcon />, rule: true },
  { label: "Check for &Updates", off: true, sub: true },
  { label: "&Layout", icon: <LayoutIcon />, rule: true, sub: true },
  { label: "&Reset Slide", icon: <ResetIcon /> },
  { label: "Format &Background...", icon: <FormatBgIcon /> },
  { label: "&Photo Album...", icon: <PhotoIcon />, rule: true, off: true },
  { label: "&Hide Slide", icon: <HideIcon /> },
];

function MenuItem({ label, icon, rule, off, sub, marked }: Entry) {
  return (
    <button role="menuitem" disabled={off} className={`relative flex h-[18px] w-full items-center pr-px text-left ${off ? "text-[#a5a5a5]" : "text-[#333]"}`}>
      {marked && <span className="absolute -left-[3px] -right-px -top-px h-5 rounded-full border-[3px] border-[#e00d14] bg-[#fce0d8] shadow-[0_1px_2px_#0006]" />}
      <span className="relative grid w-[23px] shrink-0 place-items-center pr-1">{icon}</span>
      <span className={`relative flex h-full flex-1 items-center justify-between border-t pr-[6px] whitespace-nowrap ${rule ? "border-[#dcdcdc]" : "border-transparent"}`}>
        <span><Mnemonic text={label} /></span>
        {sub && <svg viewBox="0 0 4 6" className="h-[5px] w-[3px]" aria-hidden="true"><path d="M0 0v6l4-3z" fill="currentColor" /></svg>}
      </span>
    </button>
  );
}

function ContextMenu() {
  return (
    <div role="menu" className="absolute left-[118px] top-[177px] w-[126px] border border-[#c6c6c6] bg-white pb-[2px] shadow-[2px_2px_3px_#0005]">
      <MenuItem label="Cu&t" icon={<CutIcon />} />
      <MenuItem label="&Copy" icon={<CopyIcon />} />
      <div className="flex h-[18px] items-center pr-px">
        <span className="grid w-[19px] place-items-center">
          <ClipIcon />
        </span>
        <span className="flex h-4 flex-1 items-center bg-[#ebebeb] pl-[6px] font-bold text-[#444]">Paste Options:</span>
      </div>
      <div className="flex h-5 items-center pl-[22px]">
        <button aria-label="Paste"><ClipIcon s="size-[18px]" tone="#a29fa2" /></button>
      </div>
      {entries.map((e) => (
        <MenuItem key={e.label} {...e} />
      ))}
    </div>
  );
}

/* ---------- Window ---------- */

const tabs = ["Insert", "Design", "Transitions", "Animations", "Slide Show", "Review", "View", "ACROBAT"];

export default function App() {
  return (
    <div className="relative flex min-h-screen flex-col overflow-hidden border border-[#38343a] bg-[#f0f0f0] font-['Lato',sans-serif] text-[9px] leading-3 text-[#262626]">
      <header className="bg-white">
        <div className="grid h-6 grid-cols-[1fr_auto_1fr] items-center">
          <div className="flex items-center pl-[13px]">
            <button aria-label="Save"><SaveIcon /></button>
            <button aria-label="Undo" className="ml-5 flex items-center gap-[5px]"><UndoIcon /><Caret /></button>
            <button aria-label="Redo" className="ml-[14px]"><RedoIcon /></button>
            <button aria-label="Start from beginning" className="ml-[22px]"><PresentIcon /></button>
            <button aria-label="Paste" className="ml-[22px]"><ClipIcon /></button>
            <button aria-label="Copy" className="ml-[21px]"><CopyIcon /></button>
            <button aria-label="Customize toolbar" className="ml-[25px] flex flex-col items-center gap-px text-[#2b5fae]"><span className="h-px w-1 bg-[#2b5fae]" /><Caret /></button>
          </div>
          <h2>Presentation1 - Microsoft Office</h2>
          <div className="flex items-center justify-end gap-[23px] pr-[11px] text-[#444]">
            <button aria-label="Ribbon display options"><Icon s="size-[11px]"><path d="M1 3h14v10H1zM1 5h14M8 12V7M5.500 9 8 6.500 10.500 9" /></Icon></button>
            <button aria-label="Minimize"><Icon s="size-[11px]"><path d="M3.500 10.500h9" strokeWidth="2" /></Icon></button>
            <button aria-label="Restore"><Icon s="size-[11px]"><path d="M2 6h9v7H2zM2 8h9M5 6V2.500h9V10h-3" strokeWidth="1.500" /></Icon></button>
            <button aria-label="Close"><Icon s="size-[11px]"><path d="m3 3 10 10M13 3 3 13" strokeWidth="2.200" /></Icon></button>
          </div>
        </div>
        <nav className="flex h-[17px] items-stretch border-b border-[#dcdcdc]">
          <button className="w-[43px] bg-[#d24726] text-white">File</button>
          <button className="ml-[3px] -mb-px w-[43px] border border-b-0 border-[#dcdcdc] bg-white text-[#c43e1c]">Home</button>
          <div className="flex items-center gap-5 pl-3 whitespace-nowrap">
            {tabs.map((t) => <button key={t}>{t}</button>)}
          </div>
          <label className="ml-[18px] flex flex-1 items-center gap-[3px]">
            <Icon s="size-[11px]"><path d="M6 11.500C6 9 3.500 8 3.500 5a4.500 4.500 0 0 1 9 0c0 3-2.500 4-2.500 6.500zM6 13.500h4M7 15.500h2" strokeWidth="1.400" /></Icon>
            <input aria-label="Tell me what you want to do" placeholder="Tell me what you want to do..." className="w-[140px] placeholder:text-[#666]" />
          </label>
          <button className="flex w-[54px] items-center justify-center gap-[3px] bg-[#d24726] text-white">
            <Icon><circle cx="8" cy="5.500" r="4" strokeWidth="1.600" /><path d="M2 15c0-4 3-5.500 6-5.500 1.500 0 2.500.5 3 1M12.500 10v6M9.500 13h6" strokeWidth="1.600" /></Icon>
            Share
          </button>
        </nav>
        <Ribbon />
      </header>

      <main className="flex flex-1 bg-gradient-to-b from-white to-[#eeeeee]">
        <aside className="flex w-[152px] shrink-0 items-start gap-[2px] pl-2 pt-[11px]">
          <span className="w-[7px] text-[11px] text-[#d24726]">1</span>
          <div className="w-[119px] border border-[#8e3a32] bg-[#e00d14] p-px">
            <div className="border border-[#c00] bg-white p-px"><Thumbnail /></div>
          </div>
        </aside>
        <section className="mb-[2px] flex-1 border-b border-l border-[#d5d5d5] pl-[75px] pr-[87px] pt-[9px] pb-[10px]">
          <Slide />
        </section>
      </main>

      <footer className="flex h-4 items-center bg-[#d24726] text-white">
        <span className="pl-[5px]">Slide 1 of 1</span>
        <button aria-label="Spelling" className="ml-3"><Icon><path d="M7 3H2v9h5l1 1.500M7 3v9M8 3h6v4" strokeWidth="1.400" /><path d="m8 9 2.500 3.500L15 6" strokeWidth="1.600" /></Icon></button>
        <span className="ml-[10px] flex-1">English (United States)</span>
        <button className="flex items-center gap-[3px]"><Icon s="size-[10px]"><path d="M0 9h16M0 12h16M2 15h12" strokeWidth="1.500" /><path d="M8 1v6M4 7h8L8 2z" fill="currentColor" stroke="none" /></Icon>Notes</button>
        <button className="ml-3 flex items-center gap-[3px]"><Icon s="size-[10px]"><path d="M1 2h14v9H9l-3 4v-4H1z" fill="currentColor" stroke="none" /></Icon>Comments</button>
        <div className="ml-[10px] flex h-full items-center">
          <button aria-label="Normal view" className="grid h-full w-7 place-items-center bg-[#b23415]"><Icon s="size-[11px]"><path d="M1.500 1.500h13v13h-13zM4.500 2v12M7 4h5v5H7zM7 12h5" strokeWidth="1.600" /></Icon></button>
          <button aria-label="Slide sorter" className="grid w-7 place-items-center"><Icon s="size-[11px]"><path d="M0 1h7v6H0zM9 1h7v6H9zM0 9h7v6H0zM9 9h7v6H9z" fill="currentColor" stroke="none" /></Icon></button>
          <button aria-label="Reading view" className="grid w-7 place-items-center"><Icon s="size-[11px]"><path d="M1 2h5l2 1.500L10 2h5v11h-5l-2 1.500L6 13H1zM8 3v11M3 5h3M3 7.500h3M3 10h3M10 5h3M10 7.500h3M10 10h3" /></Icon></button>
          <button aria-label="Slide show" className="grid w-7 place-items-center"><Icon s="size-[11px]"><path d="M0 2h16M2 2v7h12V2M8 9v5M4.500 14.500h7M5 5.500h6" strokeWidth="1.500" /></Icon></button>
        </div>
        <button aria-label="Zoom out" className="ml-1 grid size-[6px] place-items-center"><span className="h-px w-[5px] bg-white" /></button>
        <input
          type="range"
          aria-label="Zoom"
          min={0}
          max={100}
          defaultValue={35}
          className="mx-px h-3 w-[72px] appearance-none bg-[linear-gradient(#f3c3b6,#f3c3b6)] bg-[length:100%_1px] bg-center bg-no-repeat [&::-webkit-slider-thumb]:h-[9px] [&::-webkit-slider-thumb]:w-[3px] [&::-webkit-slider-thumb]:appearance-none [&::-webkit-slider-thumb]:bg-white"
        />
        <button aria-label="Zoom in" className="ml-[2px]"><Icon s="size-[7px]" box="0 0 8 8"><path d="M4 1v6M1 4h6" strokeWidth="1.400" /></Icon></button>
        <span className="ml-[10px]">73%</span>
        <button aria-label="Fit slide to window" className="ml-[8px] mr-1"><Icon><path d="M1.500 1.500h13v13h-13zM4 7V4h3M9 4h3v3M12 9v3H9M7 12H4V9M4 4l3 3M12 4 9 7M12 12 9 9M4 12l3-3" strokeWidth="1.400" /></Icon></button>
      </footer>
      <ContextMenu />
    </div>
  );
}
